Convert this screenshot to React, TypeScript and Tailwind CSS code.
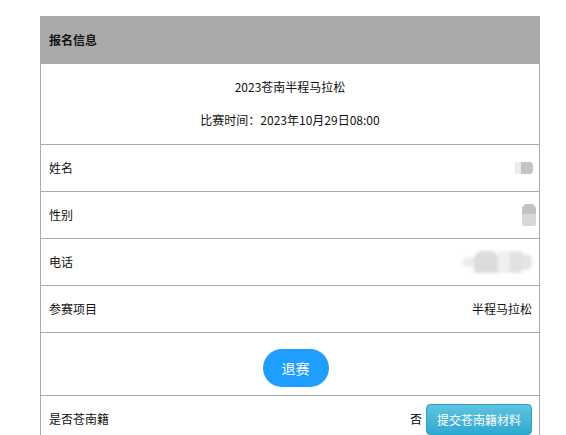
import React from "react";

const font = { fontFamily: '"Noto Sans CJK SC", "Noto Sans", sans-serif' };

function Row({ label, children }: { label: string; children?: React.ReactNode }) {
  return (
    <div className="h-[47px] border-b border-[#aaa] flex items-center justify-between pl-[8px] pr-[7px] text-[12px] text-[#111]">
      <span>{label}</span>
      <div className="flex items-center">{children}</div>
    </div>
  );
}

export default function App() {
  return (
    <div className="w-[566px] h-[435px] overflow-hidden bg-white" style={font}>
      <div className="pt-[16px] pl-[40px]">
        <div className="w-[500px] border border-[#aaa] border-b-0">
          <div className="h-[47px] bg-[#aaa] border-b border-[#aaa] flex items-center pl-[8px] text-[12px] font-bold text-[#111]">
            报名信息
          </div>
          <div className="h-[81px] border-b border-[#aaa] flex flex-col items-center pt-[13px] gap-[13px] text-[12px] text-[#111] leading-[20px]">
            <div>2023苍南半程马拉松</div>
            <div>比赛时间：2023年10月29日08:00</div>
          </div>
          <Row label="姓名">
            <div className="flex items-center mr-[-1px] blur-[0.6px]">
              <div className="w-[6px] h-[12px] bg-[#ececec]" />
              <div className="w-[12px] h-[12px] bg-[#c4c4c4] rounded-r-[4px]" />
            </div>
          </Row>
          <Row label="性别">
            <div className="flex flex-col mr-[-4px] blur-[0.6px]">
              <div className="w-[14px] h-[10px] bg-[#c2c2c2] rounded-t-[5px]" />
              <div className="w-[14px] h-[12px] bg-[#d8d8d8] rounded-b-[2px]" />
            </div>
          </Row>
          <Row label="电话">
            <div className="flex items-center blur-[1.5px]">
              <div className="w-[12px] h-[10px] bg-[#ececec] rounded-l-full" />
              <div className="w-[24px] h-[22px] bg-[#dcdcdc] rounded-t-[8px]" />
              <div className="w-[12px] h-[22px] bg-[#f0f0f0]" />
              <div className="w-[12px] h-[22px] bg-[#e2e2e2]" />
              <div className="w-[10px] h-[16px] bg-[#e4e4e4] rounded-r-[6px]" />
            </div>
          </Row>
          <Row label="参赛项目">
            <span>半程马拉松</span>
          </Row>
          <div className="h-[63px] border-b border-[#aaa] flex justify-center pt-[16px]">
            <button className="ml-[11px] w-[66px] h-[38px] rounded-full bg-[#1e9fff] text-white text-[14px] leading-[38px]">
              退赛
            </button>
          </div>
          <div className="h-[47px] flex items-start justify-between pl-[8px] pr-[7px] text-[12px] text-[#111]">
            <span className="mt-[14px]">是否苍南籍</span>
            <div className="flex items-start mt-[8px]">
              <span className="mt-[6px] mr-[4px] text-[#000]">否</span>
              <button className="w-[106px] h-[31px] rounded-[4px] border border-[#2aa5cc] bg-gradient-to-b from-[#5ec3e0] to-[#2ba9d1] text-white text-[12px] leading-[29px]">
                提交苍南籍材料
              </button>
            </div>
          </div>
        </div>
      </div>
    </div>
  );
}
